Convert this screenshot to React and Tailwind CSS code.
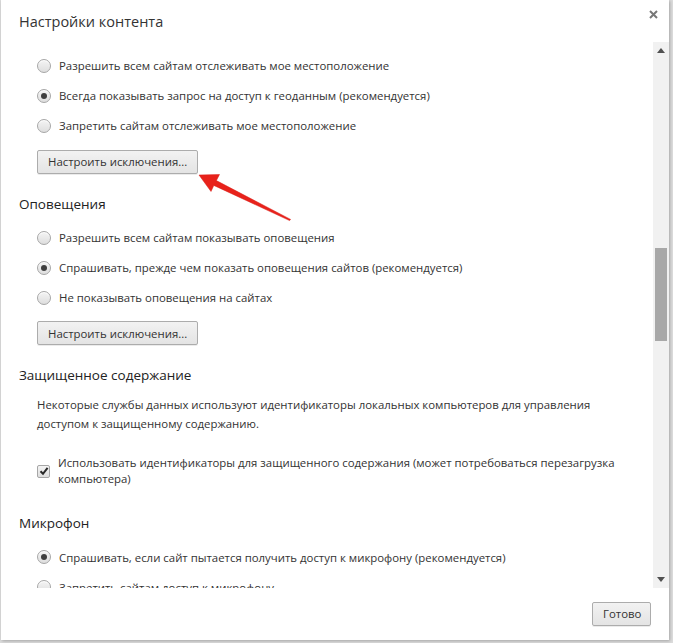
import React from 'react';

const font = { fontFamily: '"Open Sans", "Noto Sans", sans-serif' };

function Radio({ checked, label }) {
  return (
    <label className="flex h-[30px] items-center pl-[36px]">
      <span className="flex h-[14px] w-[14px] items-center justify-center rounded-full border border-[#a6a6a6] bg-gradient-to-b from-[#f4f4f4] to-[#dedede] shadow-[inset_0_1px_0_#fff]">
        {checked && <span className="h-[6px] w-[6px] rounded-full bg-[#3f3f3f]" />}
      </span>
      <span className="ml-[8px] text-[11.4px] text-[#333]">{label}</span>
    </label>
  );
}

function Checkbox({ checked, children }) {
  return (
    <div className="flex items-center pl-[36px]">
      <span className="flex h-[13px] w-[13px] shrink-0 items-center justify-center rounded-[2px] border border-[#a6a6a6] bg-gradient-to-b from-[#f4f4f4] to-[#dedede]">
        {checked && (
          <svg width="10" height="10" viewBox="0 0 10 10">
            <path d="M1.5 5.2 L4 7.8 L8.6 1.8" fill="none" stroke="#2a2a2a" strokeWidth="2" />
          </svg>
        )}
      </span>
      <span className="ml-[8px] text-[11.4px] leading-[16px] text-[#333]">{children}</span>
    </div>
  );
}

function Button({ children, className = '' }) {
  return (
    <button
      className={`h-[24px] rounded-[2px] border border-[#acacac] bg-gradient-to-b from-[#f2f2f2] to-[#e4e4e4] px-[10px] text-[11.4px] text-[#333] shadow-[0_1px_0_rgba(0,0,0,0.08)] ${className}`}
    >
      {children}
    </button>
  );
}

function Heading({ children, className = '' }) {
  return <h3 className={`h-[20px] pl-[18px] text-[13.5px] leading-[20px] text-[#222] ${className}`}>{children}</h3>;
}

function Scrollbar() {
  return (
    <div className="flex w-[16px] flex-col items-center bg-[#f1f1f1]">
      <div className="flex h-[17px] w-full items-center justify-center">
        <svg width="8" height="5" viewBox="0 0 8 5"><path d="M0 5 L4 0 L8 5 Z" fill="#505050" /></svg>
      </div>
      <div className="mt-[189px] h-[93px] w-[12px] bg-[#a8a8a8]" />
      <div className="flex-1" />
      <div className="flex h-[17px] w-full items-center justify-center">
        <svg width="8" height="5" viewBox="0 0 8 5"><path d="M0 0 L8 0 L4 5 Z" fill="#505050" /></svg>
      </div>
    </div>
  );
}

export default function App() {
  return (
    <div className="relative h-[643px] w-[673px] bg-[#dcdcdc]" style={font}>
      <div className="ml-[1px] flex h-[640px] w-[668px] flex-col bg-white shadow-[1px_1px_3px_rgba(0,0,0,0.25)]">
        {/* header */}
        <div className="relative h-[42px] shrink-0 pl-[18px] pt-[11px]">
          <h2 className="text-[14.5px] leading-[22px] text-[#333]">Настройки контента</h2>
          <button className="absolute right-[11px] top-[10px]">
            <svg width="9" height="9" viewBox="0 0 9 9">
              <path d="M1 1 L8 8 M8 1 L1 8" stroke="#777" strokeWidth="2" />
            </svg>
          </button>
        </div>

        {/* scrollable body */}
        <div className="flex h-[546px] shrink-0">
          <div className="h-full flex-1 overflow-hidden pt-[9px]">
            <Radio label="Разрешить всем сайтам отслеживать мое местоположение" />
            <Radio checked label="Всегда показывать запрос на доступ к геоданным (рекомендуется)" />
            <Radio label="Запретить сайтам отслеживать мое местоположение" />
            <div className="mt-[7px] pl-[36px]">
              <Button>Настроить исключения...</Button>
            </div>

            <Heading className="mt-[20px]">Оповещения</Heading>
            <div className="mt-[9px]">
              <Radio label="Разрешить всем сайтам показывать оповещения" />
              <Radio checked label="Спрашивать, прежде чем показать оповещения сайтов (рекомендуется)" />
              <Radio label="Не показывать оповещения на сайтах" />
            </div>
            <div className="mt-[7px] pl-[36px]">
              <Button>Настроить исключения...</Button>
            </div>

            <Heading className="mt-[20px]">Защищенное содержание</Heading>
            <p className="mt-[10px] pl-[36px] pr-[40px] text-[11.4px] leading-[19px] text-[#333]">
              Некоторые службы данных используют идентификаторы локальных компьютеров для управления доступом к
              защищенному содержанию.
            </p>
            <div className="mt-[22px] pr-[20px]">
              <Checkbox checked>
                Использовать идентификаторы для защищенного содержания (может потребоваться перезагрузка компьютера)
              </Checkbox>
            </div>

            <Heading className="mt-[26px]">Микрофон</Heading>
            <div className="mt-[9px]">
              <Radio checked label="Спрашивать, если сайт пытается получить доступ к микрофону (рекомендуется)" />
              <Radio label="Запретить сайтам доступ к микрофону" />
            </div>
          </div>
          <Scrollbar />
        </div>

        {/* footer */}
        <div className="flex flex-1 items-start justify-end pr-[18px] pt-[14px]">
          <Button className="w-[59px] px-0">Готово</Button>
        </div>
      </div>

      {/* red pointer arrow */}
      <svg className="pointer-events-none absolute inset-0" width="673" height="643" viewBox="0 0 673 643">
        <polygon
          points="199,175 219.5,174.5 216.4,180.6 290.6,219.4 289.6,220.6 213.8,185.4 211,191.5"
          fill="#e8221b"
          stroke="#d81a14"
          strokeWidth="0.5"
          strokeLinejoin="round"
        />
      </svg>
    </div>
  );
}
